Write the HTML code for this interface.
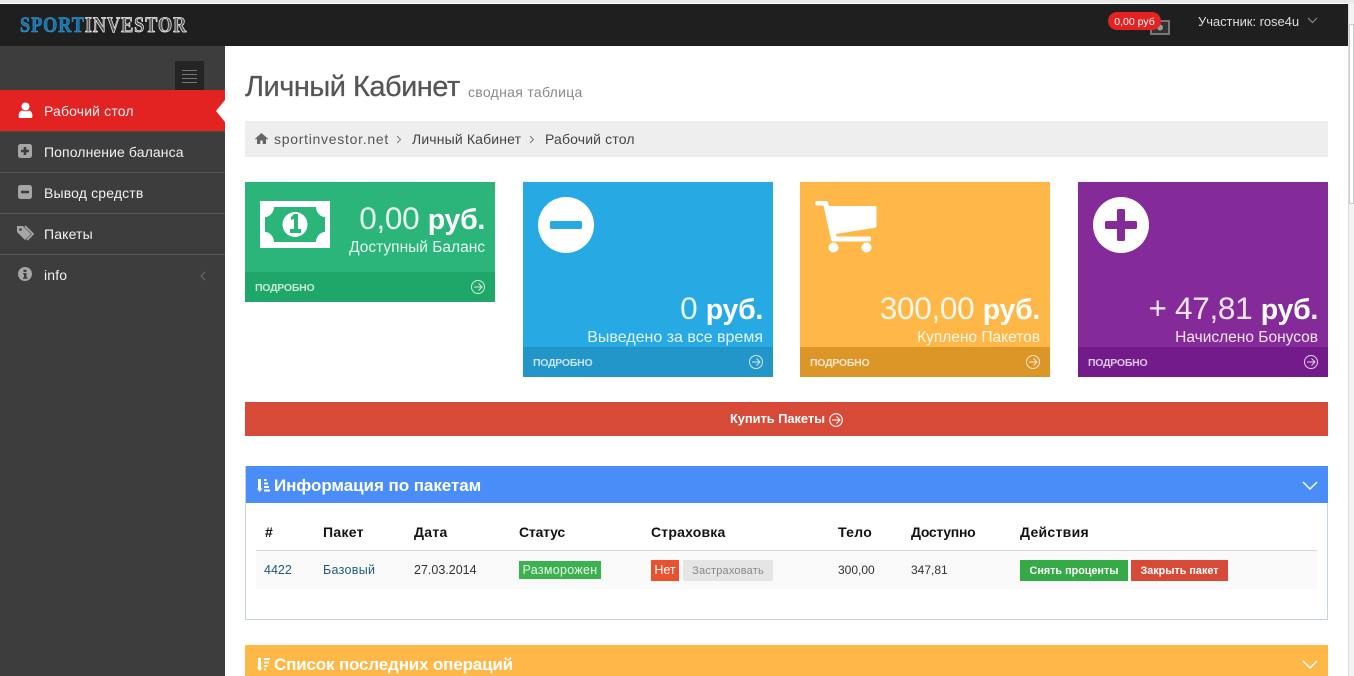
<!DOCTYPE html>
<html><head><meta charset="utf-8"><style>
html,body{margin:0;padding:0;width:1354px;height:676px;overflow:hidden;background:#fff;font-family:"Liberation Sans",sans-serif}
.a{position:absolute;white-space:nowrap}
svg{position:absolute;overflow:visible}
.m{color:#f2f2f2;font-size:14px;left:44px;letter-spacing:.15px;line-height:20px}
.sep{position:absolute;left:0;width:225px;height:1px;background:#575757}
.box{position:absolute;width:250px;color:#fff}
.foot{position:absolute;left:0;right:0;bottom:0;height:30px}
.foot b{position:absolute;left:10px;top:9px;font-size:10.5px;line-height:14px;letter-spacing:-.25px;color:rgba(255,255,255,.75)}
.num{position:absolute;right:10px;font-size:31.500px;line-height:36px;font-weight:normal;letter-spacing:-.3px;white-space:nowrap;color:rgba(255,255,255,.88)}
.num b{font-weight:bold;font-size:28.500px;color:#fff}
.lab{position:absolute;right:10px;font-size:16px;line-height:20px;white-space:nowrap;color:rgba(255,255,255,.88)}
.h{font-weight:bold;font-size:14px;color:#111;line-height:18px;letter-spacing:.3px}
.c{font-size:12.5px;color:#333;line-height:16px}
.l{color:#1f5a7e}
</style></head><body>
<div class="a" style="left:0;top:0;width:1354px;height:3px;background:#e9e9e9"></div>
<div class="a" style="left:0;top:4px;width:1348px;height:42px;background:#1f1f1f"></div>
<div class="a" style="left:1348px;top:3px;width:6px;height:673px;background:#f3f3f3;border-left:1px solid #ddd;box-sizing:border-box"></div>
<div class="a" style="left:1349px;top:24px;width:5px;height:180px;background:#fff;border:1px solid #ccc;box-sizing:border-box"></div>

<div class="a" style="left:20px;top:14px;font-family:'Liberation Serif',serif;font-weight:bold;font-size:22px;line-height:22px;letter-spacing:1.200px;color:#1b6ea8;-webkit-text-stroke:.6px #35a4e0;transform:scaleX(.825);transform-origin:0 0">SPORT<span style="color:#555;-webkit-text-stroke:.8px #f4f4f4">INVESTOR</span></div>

<svg style="left:1150px;top:20px" width="20" height="15"><rect x="1" y="1" width="18" height="13" fill="#333" stroke="#777" stroke-width="2"/><circle cx="10" cy="7.500" r="3" fill="#999"/></svg>
<div class="a" style="left:1108px;top:12px;width:53px;height:18px;border-radius:9px;background:#e32222;color:#fff;font-size:10.500px;line-height:20px;text-align:center">0,00 руб</div>
<div class="a" style="left:1198px;top:13px;color:#ddd;font-size:13px;line-height:18px;letter-spacing:-.05px">Участник: rose4u</div>
<svg style="left:1307px;top:17px" width="11" height="7"><path d="M1 1l4.500 4.500L10 1" fill="none" stroke="#888" stroke-width="1.200"/></svg>

<div class="a" style="left:0;top:46px;width:225px;height:630px;background:#3d3d3d"></div>
<div class="a" style="left:175px;top:61px;width:29px;height:29px;background:#252525"></div>
<div class="a" style="left:182px;top:70px;width:15px;height:1px;background:#777;box-shadow:0 4px #777,0 8px #777,0 12px #777"></div>
<div class="a" style="left:0;top:90px;width:225px;height:41px;background:#e32222"></div>
<svg style="left:216px;top:100px" width="9" height="22"><path d="M9 0L0 11l9 11z" fill="#fff"/></svg>
<svg style="left:18px;top:102px" width="15" height="16"><circle cx="7.500" cy="4.500" r="4" fill="#fff"/><path d="M1 16c-1-3 0-7 3-7.500c2 1 5 1 7 0c3 .5 4 4.500 3 7.500z" fill="#fff"/></svg>
<div class="a m" style="top:101px">Рабочий стол</div>
<div class="sep" style="top:131px;background:#4a4a4a"></div>
<svg style="left:18px;top:144px" width="14" height="14"><rect width="14" height="14" rx="2.500" fill="#a5a5a5"/><path d="M3 7h8M7 3v8" stroke="#3d3d3d" stroke-width="2.600"/></svg>
<div class="a m" style="top:142px;letter-spacing:.1px">Пополнение баланса</div>
<div class="sep" style="top:172px"></div>
<svg style="left:18px;top:185px" width="14" height="14"><rect width="14" height="14" rx="2.500" fill="#a5a5a5"/><path d="M3 7h8" stroke="#3d3d3d" stroke-width="2.600"/></svg>
<div class="a m" style="top:183px">Вывод средств</div>
<div class="sep" style="top:213px"></div>
<svg style="left:17px;top:226px" width="17" height="15"><path d="M0 0h6l8 8-6 6-8-8z" fill="#a5a5a5"/><path d="M8 0l8 8-6 6" fill="none" stroke="#a5a5a5" stroke-width="1.800"/><circle cx="3.500" cy="3.500" r="1.300" fill="#3d3d3d"/></svg>
<div class="a m" style="top:224px">Пакеты</div>
<div class="sep" style="top:254px"></div>
<svg style="left:18px;top:267px" width="14" height="14"><circle cx="7" cy="7" r="7" fill="#a5a5a5"/><path d="M5.500 2.800h3v2.200h-3zM5 6h3.500v4.500h1v1.200h-4.500v-1.200h1v-3.300h-1z" fill="#3d3d3d"/></svg>
<div class="a m" style="top:265px">info</div>
<svg style="left:199px;top:271px" width="7" height="10"><path d="M6 1L2 5l4 4" fill="none" stroke="#6b6b6b" stroke-width="1.200"/></svg>

<div class="a" style="left:245px;top:68px;font-size:29px;line-height:38px;color:#555;letter-spacing:-.5px;-webkit-text-stroke:.25px #555">Личный Кабинет</div>
<div class="a" style="left:468px;top:83px;font-size:14px;line-height:18px;color:#888;letter-spacing:.3px">сводная таблица</div>

<div class="a" style="left:245px;top:121px;width:1083px;height:36px;background:#eee"></div>
<svg style="left:255px;top:133px" width="13" height="11"><path d="M6.500 0L0 5.800l.8.800L2 5.600V11h3.300V7.500h2.400V11H11V5.600l1.200 1 .8-.8z" fill="#666"/></svg>
<div class="a" style="left:274px;top:130px;font-size:14px;line-height:18px;color:#555;letter-spacing:.72px">sportinvestor.net</div>
<svg style="left:396px;top:135px" width="7" height="9"><path d="M1 1l3.500 3.500L1 8" fill="none" stroke="#777"/></svg>
<div class="a" style="left:412px;top:130px;font-size:14px;line-height:18px;color:#444;letter-spacing:.15px">Личный Кабинет</div>
<svg style="left:529px;top:135px" width="7" height="9"><path d="M1 1l3.500 3.500L1 8" fill="none" stroke="#777"/></svg>
<div class="a" style="left:545px;top:130px;font-size:14px;line-height:18px;color:#444;letter-spacing:.15px">Рабочий стол</div>

<!-- green -->
<div class="box" style="left:245px;top:182px;height:120px;background:#2cb57a">
<svg style="left:15px;top:19px" width="70" height="47"><path d="M0 0h70v47H0z" fill="#fff"/><path d="M14 6h42c0 5 4 10 9 10v15c-5 0-9 5-9 10H14c0-5-4-10-9-10V16c5 0 9-5 9-10z" fill="#2cb57a"/><circle cx="35" cy="23.500" r="12.500" fill="#fff"/><path d="M34 13h4v15h3v4H30v-4h4V18l-3 1v-3z" fill="#2cb57a"/></svg>
<div class="num" style="top:18px">0,00 <b>руб.</b></div>
<div class="lab" style="top:56px;font-size:15.500px">Доступный Баланс</div>
<div class="foot" style="background:#1ea768"><b>ПОДРОБНО</b><svg style="left:226px;top:8px" width="14" height="14"><circle cx="7" cy="7" r="6.500" fill="none" stroke="rgba(255,255,255,.8)"/><path d="M3 7h8M7.500 3.500L11 7l-3.500 3.500" fill="none" stroke="rgba(255,255,255,.8)"/></svg></div>
</div>
<!-- blue -->
<div class="box" style="left:523px;top:182px;height:195px;background:#27a9e3">
<svg style="left:15px;top:15px" width="56" height="56"><circle cx="28" cy="28" r="28" fill="#fff"/><rect x="12" y="24" width="32" height="8" rx="1.500" fill="#27a9e3"/></svg>
<div class="num" style="top:108px">0 <b>руб.</b></div>
<div class="lab" style="top:146px">Выведено за все время</div>
<div class="foot" style="background:#2295c9"><b>ПОДРОБНО</b><svg style="left:226px;top:8px" width="14" height="14"><circle cx="7" cy="7" r="6.500" fill="none" stroke="rgba(255,255,255,.8)"/><path d="M3 7h8M7.500 3.500L11 7l-3.500 3.500" fill="none" stroke="rgba(255,255,255,.8)"/></svg></div>
</div>
<!-- orange -->
<div class="box" style="left:800px;top:182px;height:195px;background:#ffb848">
<svg style="left:15px;top:19px" width="62" height="53"><path d="M0 1.500C0 .5 1 0 2 0h9c1 0 2 .7 2.200 2L14 5h46c1 0 1.500 .7 1.500 1.500V25c0 1-.6 1.500-1.500 1.700L21 33l.5 2.500H55c1.500 0 1.500 5 0 5H18c-1 0-1.800-.7-2-1.700L8.500 4.500H2C.5 4.500 0 3 0 1.500z" fill="#fff"/><circle cx="18.500" cy="46.500" r="5" fill="#fff"/><circle cx="51.500" cy="46.500" r="5" fill="#fff"/></svg>
<div class="num" style="top:108px">300,00 <b>руб.</b></div>
<div class="lab" style="top:146px;font-size:15.500px">Куплено Пакетов</div>
<div class="foot" style="background:#dc9628"><b>ПОДРОБНО</b><svg style="left:226px;top:8px" width="14" height="14"><circle cx="7" cy="7" r="6.500" fill="none" stroke="rgba(255,255,255,.8)"/><path d="M3 7h8M7.500 3.500L11 7l-3.500 3.500" fill="none" stroke="rgba(255,255,255,.8)"/></svg></div>
</div>
<!-- purple -->
<div class="box" style="left:1078px;top:182px;height:195px;background:#852b99">
<svg style="left:15px;top:15px" width="56" height="56"><circle cx="28" cy="28" r="28" fill="#fff"/><rect x="12" y="24" width="32" height="8" rx="1.500" fill="#852b99"/><rect x="24" y="12" width="8" height="32" rx="1.500" fill="#852b99"/></svg>
<div class="num" style="top:108px">+ 47,81 <b>руб.</b></div>
<div class="lab" style="top:146px;font-size:15.500px">Начислено Бонусов</div>
<div class="foot" style="background:#741b8c"><b>ПОДРОБНО</b><svg style="left:226px;top:8px" width="14" height="14"><circle cx="7" cy="7" r="6.500" fill="none" stroke="rgba(255,255,255,.8)"/><path d="M3 7h8M7.500 3.500L11 7l-3.500 3.500" fill="none" stroke="rgba(255,255,255,.8)"/></svg></div>
</div>

<div class="a" style="left:245px;top:402px;width:1083px;height:34px;background:#d84a38"></div>
<div class="a" style="left:730px;top:410px;font-size:12.800px;line-height:18px;color:#fff;font-weight:bold">Купить Пакеты</div>
<svg style="left:829px;top:413px" width="14" height="14"><circle cx="7" cy="7" r="6.300" fill="none" stroke="#fff" stroke-width="1.100"/><path d="M3 7h8M7.500 3.500L11 7l-3.500 3.500" fill="none" stroke="#fff" stroke-width="1.100"/></svg>

<!-- panel 1 -->
<div class="a" style="left:245px;top:466px;width:1083px;height:154px;box-sizing:border-box;border:1px solid #c5d3e0;border-top:0"></div>
<div class="a" style="left:246px;top:466px;width:1082px;height:37px;background:#4b8df8"></div>
<svg style="left:257px;top:479px" width="13" height="14"><path d="M2.500 0v11" stroke="#fff" stroke-width="3"/><path d="M0 9.500h5.500L2.750 13z" fill="#fff"/><path d="M7 1h2.500M7 4.500h4M7 8h5M7 11.500h6" stroke="#fff" stroke-width="2"/></svg>
<div class="a" style="left:274px;top:476px;font-size:17px;line-height:20px;color:#fff;font-weight:bold;letter-spacing:-.05px">Информация по пакетам</div>
<svg style="left:1302px;top:481px" width="16" height="10"><path d="M1 1l7 7 7-7" fill="none" stroke="#fff" stroke-width="1.500"/></svg>

<div class="a h" style="left:265px;top:523px">#</div>
<div class="a h" style="left:323px;top:523px">Пакет</div>
<div class="a h" style="left:414px;top:523px">Дата</div>
<div class="a h" style="left:519px;top:523px;letter-spacing:-.2px">Статус</div>
<div class="a h" style="left:651px;top:523px;letter-spacing:.2px">Страховка</div>
<div class="a h" style="left:838px;top:523px">Тело</div>
<div class="a h" style="left:911px;top:523px;letter-spacing:-.3px">Доступно</div>
<div class="a h" style="left:1020px;top:523px">Действия</div>
<div class="a" style="left:256px;top:550px;width:1061px;height:1px;background:#d5d8e0"></div>
<div class="a" style="left:256px;top:551px;width:1061px;height:38px;background:#f9f9f9"></div>
<div class="a c l" style="left:264px;top:562px">4422</div>
<div class="a c l" style="left:323px;top:562px;letter-spacing:.3px">Базовый</div>
<div class="a c" style="left:414px;top:562px">27.03.2014</div>
<div class="a" style="left:519px;top:561px;width:82px;height:18px;background:#3cb14f;color:#e8f5ea;font-size:12.500px;line-height:18px;text-align:center;letter-spacing:.3px">Разморожен</div>
<div class="a" style="left:651px;top:560px;width:28px;height:21px;background:#e9512f;color:#fff;font-size:12.500px;line-height:20px;text-align:center">Нет</div>
<div class="a" style="left:683px;top:560px;width:90px;height:21px;background:#e5e5e5;color:#888;font-size:11px;line-height:23px;text-align:center;letter-spacing:.2px">Застраховать</div>
<div class="a c" style="left:838px;top:562px;font-size:12px">300,00</div>
<div class="a c" style="left:911px;top:562px;font-size:12px">347,81</div>
<div class="a" style="left:1020px;top:560px;width:108px;height:21px;background:#35aa47;color:#fff;font-size:10.800px;font-weight:bold;line-height:23px;text-align:center">Снять проценты</div>
<div class="a" style="left:1131px;top:560px;width:97px;height:21px;background:#d84a38;color:#fff;font-size:10.800px;font-weight:bold;line-height:23px;text-align:center">Закрыть пакет</div>

<!-- panel 2 -->
<div class="a" style="left:245px;top:645px;width:1083px;height:31px;background:#ffb848"></div>
<svg style="left:257px;top:658px" width="13" height="14"><path d="M2.500 0v11" stroke="#fff" stroke-width="3"/><path d="M0 9.500h5.500L2.750 13z" fill="#fff"/><path d="M7 1h6M7 4.500h5M7 8h3.500M7 11.500h2" stroke="#fff" stroke-width="2"/></svg>
<div class="a" style="left:274px;top:655px;font-size:17px;line-height:20px;color:#fff;font-weight:bold;letter-spacing:-.16px">Список последних операций</div>
<svg style="left:1302px;top:660px" width="16" height="10"><path d="M1 1l7 7 7-7" fill="none" stroke="#fff" stroke-width="1.500"/></svg>
</body></html>
